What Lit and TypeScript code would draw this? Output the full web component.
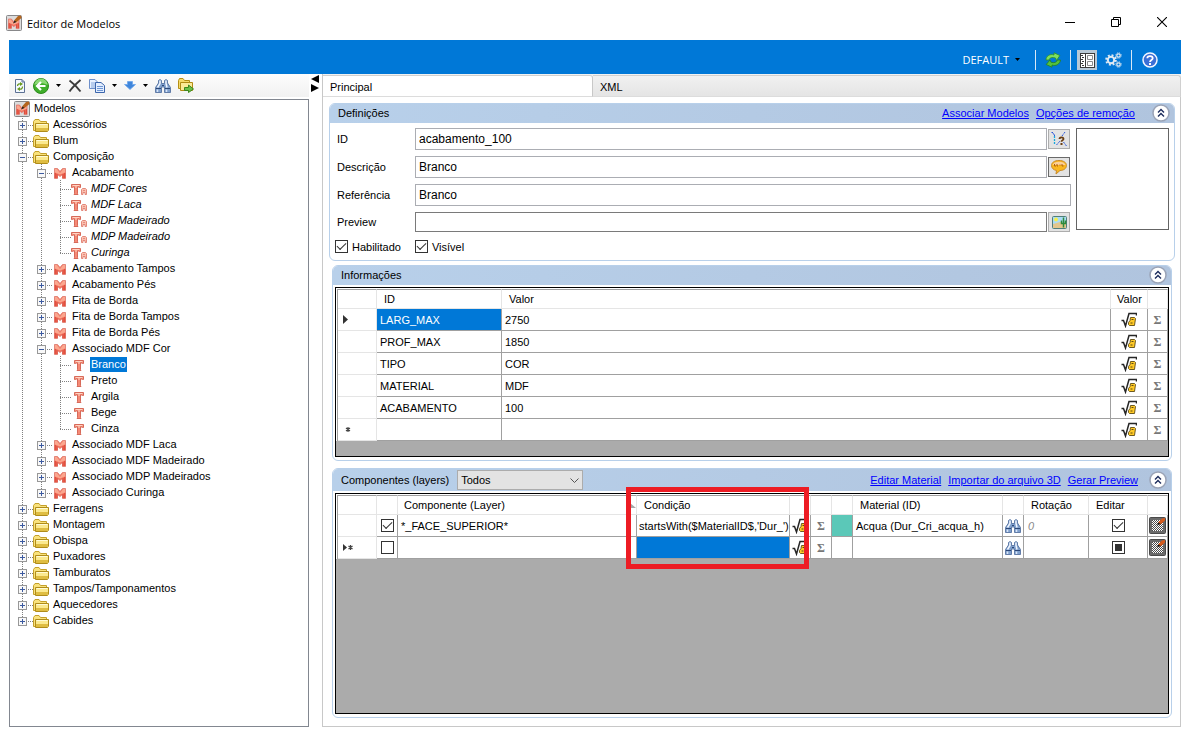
import { LitElement, html, svg, css, nothing } from "lit";
import { customElement } from "lit/decorators.js";
import { classMap } from "lit/directives/class-map.js";

/* ---------- icons ---------- */

const modelMark = svg`
  <path d="M.5 .5H3.500L6 3.500L8.500 .5H11.500V10.500H8.500V6.500L6 8.500L3.500 6.500V10.500H.5Z" fill="#f4705c" stroke="#e08074" stroke-width=".9"/>
  <path d="M1 1H3L6 5L9 1H11V4.500L6 6.500L1 4.500Z" fill="#ffcbb0" opacity=".6"/>
  <path d="M1.200 5V10M3 6V10M9 6V10M10.800 5V10" stroke="#d9402f" stroke-width=".9"/>`;

const appIcon = html`<svg width="16" height="16" viewBox="0 0 16 16" aria-hidden="true">
  <rect x=".5" y=".5" width="15" height="15" rx="1" fill="#dcdcdc" stroke="#88888a"/>
  <g transform="translate(2 3.500) scale(.96)">${modelMark}</g>
  <path d="M8 7.500L8.500 5L12 1L15 .5L15.500 3L10.500 7Z" fill="#b5651d"/>
  <path d="M7 8.500L8.500 5.500L10.500 7Z" fill="#222"/>
</svg>`;

const folderIcon = html`<svg width="16" height="14" viewBox="0 0 16 14" aria-hidden="true">
  <path d="M.5 12.500V3.500L2 1.500H6L7.500 3.500H13.500V12.500Z" fill="#f9e27c" stroke="#c4a02a"/>
  <path d="M2.500 13.500V5.500H15.500V12L14.500 13.500Z" fill="#fbe98e" stroke="#b08c1a"/>
  <path d="M3 10H15V12L14 13H3Z" fill="#dfbd42"/>
  <path d="M3.500 6.500H14.500" stroke="#fffbd6"/>
</svg>`;

const groupIcon = html`<svg width="12" height="11" viewBox="0 0 12 11" aria-hidden="true">${modelMark}</svg>`;

const itemShape = svg`
  <path d="M.5 .5H9.500V3.500H8.500L8 3H6.500V9.500L7 10.500H3L3.500 9.500V3H2L1.500 3.500H.5Z" fill="#f58a76" stroke="#d2604f" stroke-width=".9"/>
  <path d="M1.500 1.500H8.500M5 2V4" stroke="#ffd3c2"/>`;

const itemIcon = html`<svg width="10" height="11" viewBox="0 0 10 11" aria-hidden="true">${itemShape}</svg>`;

const autoItemIcon = html`<svg width="16" height="11" viewBox="0 0 16 11" aria-hidden="true">
  ${itemShape}
  <path d="M10.500 10.500V5.500L11.500 4.500H14.500L15.500 5.500V10.500H14V8.500H12V10.500Z" fill="#fbc0b0" stroke="#e07f70" stroke-width=".9"/>
  <path d="M12 6.500H14" stroke="#e07f70" stroke-width=".8"/>
</svg>`;

const refreshDocIcon = html`<svg width="12" height="14" viewBox="0 0 12 14" aria-hidden="true">
  <path d="M1.500 .5H8L10.500 3V13.500H1.500Z" fill="#f4f8ff" stroke="#5c7194"/>
  <path d="M8 .5V3H10.500" fill="none" stroke="#5c7194"/>
  <path d="M3.500 7C3.500 5 5 4.500 7 5M8.500 7.500C8.500 10 7 10.500 5 10" fill="none" stroke="#6a9a1f" stroke-width="1.300"/>
  <path d="M6 3L9 5L6 7ZM6 8L3 10L6 12Z" fill="#6a9a1f"/>
</svg>`;

const backIcon = html`<svg width="16" height="16" viewBox="0 0 16 16" aria-hidden="true">
  <circle cx="8" cy="8" r="7.500" fill="#3fae2a" stroke="#2c8a1c"/>
  <path d="M1.500 7A6.500 6.500 0 0 1 14.500 7C11 4.500 5 4.500 1.500 7Z" fill="#8ad873"/>
  <path d="M12.500 8H5M8 4L4 8L8 12" fill="none" stroke="#fff" stroke-width="2.200"/>
</svg>`;

const deleteIcon = html`<svg width="14" height="14" viewBox="0 0 14 14" aria-hidden="true">
  <path d="M1.500 1.500C5 4 9 8 12.500 12.500M12.500 1C9 4 4.500 8 1.500 12.500" fill="none" stroke="#3c3c3c" stroke-width="1.900"/>
</svg>`;

const copyIcon = html`<svg width="16" height="14" viewBox="0 0 16 14" aria-hidden="true">
  <path d="M.5 .5H6L8.500 3V9.500H.5Z" fill="#e8f1ff" stroke="#6d8fca"/>
  <path d="M2 4H7M2 6H7M2 8H7" stroke="#86a8dc"/>
  <path d="M6.500 3.500H12L15.500 6.500V13.500H6.500Z" fill="#e3eeff" stroke="#3c66ac"/>
  <path d="M8 7.500H14M8 9.500H14M8 11.500H14" stroke="#6f97d4"/>
</svg>`;

const downIcon = html`<svg width="12" height="9" viewBox="0 0 12 9" aria-hidden="true">
  <path d="M3.500 .5H8.500V3.500H11.500L6 8.500L.5 3.500H3.500Z" fill="#3f86dc" stroke="#6fa6ea" stroke-width=".8"/>
</svg>`;

const binocularsIcon = html`<svg width="16" height="14" viewBox="0 0 16 14" aria-hidden="true">
  <path d="M3.500 1.500L5 .5L6.500 1.500V4.500H9.500V1.500L11 .5L12.500 1.500V4L15.500 8.500V13.500H9.500V8H6.500V13.500H.5V8.500L3.500 4Z" fill="#7f9fcc" stroke="#4a6899" stroke-width=".8"/>
  <path d="M5 1.500V4.500L2.500 8.500M11 1.500V4.500L12 8.500" stroke="#f0f6ff" stroke-width="1.500" fill="none"/>
  <path d="M1 9.500H6M10 9.500H15M7 6.500H9" stroke="#2b4777"/>
  <path d="M2.500 10.500V13M11.500 10.500V13" stroke="#d9e6f8" stroke-width="1.500"/>
</svg>`;

const exportFolderIcon = html`<svg width="16" height="15" viewBox="0 0 16 15" aria-hidden="true">
  <path d="M.5 10.500V2.500L1.500 .5H5L6.500 2.500H11.500V10.500Z" fill="#f6da6a" stroke="#b58f14"/>
  <path d="M2.500 12.500V4.500H14.500V12.500Z" fill="#fbea97" stroke="#b08b14"/>
  <path d="M6.500 9.500H10.500V7L15.500 11L10.500 14.500V12.500H6.500Z" fill="#6cc04a" stroke="#3c861d"/>
</svg>`;

const caret = html`<svg width="5" height="3" viewBox="0 0 5 3" aria-hidden="true"><path d="M0 0H5L2.500 3Z" fill="#000"/></svg>`;

const syncIcon = html`<svg width="16" height="16" viewBox="0 0 16 16" aria-hidden="true">
  <path d="M1 8C1 4 5 1.500 9 3V.8L14.800 3.500L11.500 8.500L10.500 6C7.500 4.800 4.500 5.500 4 8Z" fill="#7fe060" stroke="#2c8f2a" stroke-width=".8"/>
  <path d="M15.500 8C15 12 11 14.500 7 13V15.200L1.200 12.500L5 8L6 10.200C9 11.200 11.500 10.500 12.500 8Z" fill="#55c23e" stroke="#23801f" stroke-width=".8"/>
</svg>`;

const panelIcon = html`<svg width="20" height="20" viewBox="0 0 20 20" aria-hidden="true">
  <rect width="20" height="20" fill="#b9c9d6"/>
  <rect x="3.500" y="3.500" width="14" height="14" fill="#fff" stroke="#3b3b3b"/>
  <path d="M8.500 3.500V17.500" stroke="#3b3b3b"/>
  <path d="M4 5.500H6M5 7.500H7M4 9.500H6M5 11.500H7M4 13.500H6M5 15.500H7" stroke="#3b3b3b"/>
  <path d="M10.500 5.500H15.500V9.500H10.500ZM10.500 11.500H15.500V15.500H10.500Z" fill="none" stroke="#8a8a8a"/>
</svg>`;

const gearsIcon = html`<svg width="17" height="16" viewBox="0 0 17 16" aria-hidden="true">
  <circle cx="6" cy="8" r="3.200" fill="none" stroke="#dfe9f2" stroke-width="2"/>
  <circle cx="6" cy="8" r="4.800" fill="none" stroke="#dfe9f2" stroke-width="2" stroke-dasharray="1.900 1.870"/>
  <circle cx="13.500" cy="3.500" r="1.700" fill="none" stroke="#dfe9f2" stroke-width="1.200"/>
  <circle cx="13.500" cy="3.500" r="2.700" fill="none" stroke="#dfe9f2" stroke-dasharray="1.100 1.020"/>
  <circle cx="13.500" cy="12.500" r="1.700" fill="none" stroke="#dfe9f2" stroke-width="1.200"/>
  <circle cx="13.500" cy="12.500" r="2.700" fill="none" stroke="#dfe9f2" stroke-dasharray="1.100 1.020"/>
</svg>`;

const helpIcon = html`<svg width="16" height="16" viewBox="0 0 16 16" aria-hidden="true">
  <circle cx="8" cy="8" r="7" fill="#3b6fd6" stroke="#f2f6ff" stroke-width="1.500"/>
  <path d="M5.300 6.200C5.300 3.300 10.700 3.300 10.700 6.200C10.700 8 8 7.800 8 10" fill="none" stroke="#fff" stroke-width="1.800"/>
  <rect x="7" y="11" width="2" height="2" fill="#fff"/>
</svg>`;

const collapseIcon = html`<svg width="18" height="18" viewBox="0 0 18 18" aria-hidden="true">
  <circle cx="9" cy="9" r="8" fill="#fff" stroke="#9aa3b6" stroke-width="1.500"/>
  <path d="M6 8.500L9 5.500L12 8.500M6 12.500L9 9.500L12 12.500" fill="none" stroke="#1c2c5c" stroke-width="1.400"/>
</svg>`;

const formulaIcon = html`<svg width="16" height="16" viewBox="0 0 16 16" aria-hidden="true">
  <path d="M.5 8.500H2.500L4.500 14L8 1.500H15.500V3.500" fill="none" stroke="#262626" stroke-width="1.500"/>
  <path d="M9.500 5.500H13.500L14.500 6.500L13.500 13.500H8.500L7.500 12.500V10.500L9 8.500Z" fill="#ffc926" stroke="#5c4a14" stroke-width=".9"/>
  <path d="M10.500 7.500H12.500M9.500 11H11.500" stroke="#5c4a14"/>
</svg>`;

const variableIcon = html`<svg width="16" height="16" viewBox="0 0 16 16" aria-hidden="true">
  <path d="M.5 1.500H2V3H3.500V5" fill="none" stroke="#2c56d8" stroke-dasharray="1.500 1"/>
  <path d="M3.500 5V13.500" stroke="#17a7dc" stroke-dasharray="2 1" stroke-width="1.300"/>
  <path d="M5.500 14L9 10M11 5L14 1" stroke="#2c56d8" stroke-dasharray="2 1"/>
  <path d="M12.500 11L15.500 15" stroke="#2c56d8" stroke-dasharray="2 1"/>
  <path d="M8.500 8C8.500 5.800 12.500 5.800 12.500 8C12.500 9.500 10.500 9 10.500 10.800" fill="none" stroke="#6b3f14" stroke-width="1.800"/>
  <rect x="9.500" y="12" width="2" height="2" fill="#6b3f14"/>
</svg>`;

const speechIcon = html`<svg width="16" height="15" viewBox="0 0 16 15" aria-hidden="true">
  <path d="M8 .5C12.500 .5 15.500 2.500 15.500 5.500C15.500 8.500 12.500 10.500 9 10.500L5 14L5.500 10.500C2.500 10 .5 8 .5 5.500C.5 2.500 3.500 .5 8 .5Z" fill="#f9b720" stroke="#c98a2a"/>
  <path d="M1.500 5C2.500 .5 13.500 .5 14.500 5Z" fill="#fbd09a"/>
  <path d="M3.500 4V6H5M6 4V6H7M9 4.500V5.500M11 4V6H12.500" fill="none" stroke="#b0600c"/>
</svg>`;

const pictureIcon = html`<svg width="15" height="13" viewBox="0 0 15 13" aria-hidden="true">
  <rect x=".5" y=".5" width="14" height="12" rx="1" fill="#a9dcf5" stroke="#4f7f7a"/>
  <path d="M1 8L8 6L14 8V12H1Z" fill="#e2c68c"/>
  <circle cx="4" cy="3.500" r="1.900" fill="#f7f04a"/>
  <path d="M11.500 1.500V11.500M9.500 4.500V7.500H13.500V4.500" fill="none" stroke="#2f8a3a" stroke-width="1.500"/>
</svg>`;

const materialEditIcon = html`<svg width="17" height="17" viewBox="0 0 17 17" aria-hidden="true">
  <rect x=".5" y=".5" width="16" height="16" rx="1" fill="#6a6a6a" stroke="#4a4a4a"/>
  <rect x="3" y="3" width="11" height="11" fill="#fff"/>
  <path d="M3 3.500H14M4 4.500H14M3 5.500H14M4 6.500H14M3 7.500H14M4 8.500H14M3 9.500H14M4 10.500H14M3 11.500H14M4 12.500H14M3 13.500H14" stroke="#4c4c4c" stroke-dasharray="1 1" shape-rendering="crispEdges"/>
  <path d="M9 7.500L9.500 5L13 1.500L16 1V3.500L12 7Z" fill="#d65a1c"/>
  <path d="M8 8.500L9.500 5.500L11.500 7Z" fill="#111"/>
</svg>`;

const currentMark = html`<svg width="5" height="9" viewBox="0 0 5 9" role="img" aria-label="linha atual"><path d="M0 0L5 4.500L0 9Z" fill="#333"/></svg>`;

const newMark = html`<svg width="8" height="5" viewBox="0 0 8 5" role="img" aria-label="nova linha"><path d="M5 0V5M3 1L7 4M7 1L3 4" stroke="#444" stroke-width="1.200"/></svg>`;

const bothMark = html`<svg width="10" height="7" viewBox="0 0 10 7" role="img" aria-label="nova linha atual"><path d="M0 0L4 3.500L0 7Z" fill="#333"/><path d="M7.500 1V6M5.500 2L9.500 5M9.500 2L5.500 5" stroke="#444" stroke-width="1.200"/></svg>`;

/* ---------- data ---------- */

type Kind = "root" | "folder" | "group" | "item" | "auto";

interface TreeNode {
  label: string;
  kind: Kind;
  selected?: boolean;
  children?: TreeNode[];
}

const leaf = (kind: Kind) => (label: string): TreeNode => ({ label, kind });

const tree: TreeNode = {
  label: "Modelos",
  kind: "root",
  children: [
    ...["Acessórios", "Blum"].map(leaf("folder")),
    {
      label: "Composição",
      kind: "folder",
      children: [
        {
          label: "Acabamento",
          kind: "group",
          children: ["MDF Cores", "MDF Laca", "MDF Madeirado", "MDP Madeirado", "Curinga"].map(leaf("auto")),
        },
        ...["Acabamento Tampos", "Acabamento Pés", "Fita de Borda", "Fita de Borda Tampos", "Fita de Borda Pés"].map(leaf("group")),
        {
          label: "Associado MDF Cor",
          kind: "group",
          children: [
            { label: "Branco", kind: "item", selected: true },
            ...["Preto", "Argila", "Bege", "Cinza"].map(leaf("item")),
          ],
        },
        ...["Associado MDF Laca", "Associado MDF Madeirado", "Associado MDP Madeirados", "Associado Curinga"].map(leaf("group")),
      ],
    },
    ...["Ferragens", "Montagem", "Obispa", "Puxadores", "Tamburatos", "Tampos/Tamponamentos", "Aquecedores", "Cabides"].map(leaf("folder")),
  ],
};

const nodeIcons = { root: appIcon, folder: folderIcon, group: groupIcon, item: itemIcon, auto: autoItemIcon };

const info: [string, string][] = [
  ["LARG_MAX", "2750"],
  ["PROF_MAX", "1850"],
  ["TIPO", "COR"],
  ["MATERIAL", "MDF"],
  ["ACABAMENTO", "100"],
];

/* ---------- tree ---------- */

@customElement("model-tree")
export class ModelTree extends LitElement {
  static styles = css`
    :host { display: block; }
    .tree { padding-left: 3px; }
    .row { display: flex; align-items: center; height: 16px; }
    .rail { flex: none; display: block; overflow: visible; }
    .icon { flex: none; width: 18px; display: flex; justify-content: center; padding-top: 2px; }
    .label { margin-left: 2px; padding: 0 1px; line-height: 15px; white-space: nowrap; }
    .auto .label { font-style: italic; }
    .selected .label { background: #0078d7; color: #fff; }
  `;

  private rail(line: "none" | "full" | "half", isNode: boolean, expander: "" | "+" | "-") {
    return html`<svg class="rail" width="19" height="16" viewBox="0 0 19 16" shape-rendering="crispEdges" aria-hidden="true">
      ${line === "none" ? nothing : svg`<path d="M9.500 0V${line === "full" ? 16 : 10}" stroke="#808080" stroke-dasharray="1 1"/>`}
      ${isNode ? svg`<path d="M9 9.500H20" stroke="#808080" stroke-dasharray="1 1"/>` : nothing}
      ${expander
        ? svg`<rect x="5.500" y="5.500" width="8" height="8" fill="#f8f8f8" stroke="#989898"/>
            <path d="M7 9.500H12${expander === "+" ? "M9.500 7V12" : ""}" stroke="#3c5aa0"/>`
        : nothing}
    </svg>`;
  }

  private renderNode(node: TreeNode, level: number, last: boolean, above: boolean[]): unknown {
    const kids = node.children ?? [];
    const expander = node.kind === "folder" || node.kind === "group" ? (kids.length ? "-" : "+") : "";
    return html`
      <div
        class=${classMap({ row: true, auto: node.kind === "auto", selected: !!node.selected })}
        role="treeitem"
        aria-level=${level + 1}
        aria-selected=${node.selected ? "true" : "false"}
      >
        ${above.map((open) => this.rail(open ? "full" : "none", false, ""))}
        ${level ? this.rail(last ? "half" : "full", true, expander) : nothing}
        <span class="icon">${nodeIcons[node.kind]}</span>
        <span class="label">${node.label}</span>
      </div>
      ${kids.map((kid, i) => this.renderNode(kid, level + 1, i === kids.length - 1, level ? [...above, !last] : []))}
    `;
  }

  render() {
    return html`<div class="tree" role="tree" aria-label="Modelos">${this.renderNode(tree, 0, true, [])}</div>`;
  }
}

/* ---------- window ---------- */

@customElement("app-root")
export class AppRoot extends LitElement {
  static styles = css`
    :host {
      display: flex;
      flex-direction: column;
      min-height: 100vh;
      box-sizing: border-box;
      padding: 0 5px 9px 9px;
      background: #fff;
      color: #000;
      font: 11px/16px "Liberation Sans", Arial, sans-serif;
    }
    *, *::before, *::after { box-sizing: border-box; }
    button { font: inherit; color: inherit; border: 0; background: none; padding: 0; margin: 0; display: inline-flex; align-items: center; justify-content: center; }
    svg { display: block; flex: none; }
    a { color: #0000ff; }

    .titlebar { display: flex; align-items: center; height: 40px; padding-top: 6px; margin-left: -3px; }
    .title { flex: 1; margin: 2px 0 0 5px; font: 11px/16px "Open Sans", "Noto Sans", sans-serif; }
    .winbtn { width: 46px; height: 30px; }
    .winbtns { display: flex; margin: -2px -4px 0 0; }

    .ribbon { display: flex; align-items: center; justify-content: flex-end; height: 34px; padding: 5px 17px 0 0; background: #0078d7; }
    .ribbon button { width: 28px; height: 24px; }
    .ribbon .profile { width: auto; padding-right: 11px; gap: 6px; color: #fff; font: 11px/16px "Open Sans", "Noto Sans", sans-serif; }
    .ribbon .sync { width: 26px; }
    .ribbon .panel { width: 24px; }
    .sep { width: 1px; height: 20px; margin: 0 4px; background: #d8e8f6; }

    .body { flex: 1; display: flex; }
    .side { flex: none; width: 300px; display: flex; flex-direction: column; }
    .toolbar { display: flex; align-items: center; height: 23px; margin-bottom: 2px; padding-left: 5px; gap: 7px; background: linear-gradient(#fdfdfd, #f1f1f1); }
    .toolbar .wide { gap: 7px; }
    .treebox { flex: 1; border: 1px solid #828790; background: #fff; }
    .splitter { flex: none; width: 13px; padding: 1px 0 0 1px; }

    .main { flex: 1; min-width: 0; display: flex; flex-direction: column; }
    .tabs { display: flex; height: 23px; padding-top: 1px; background: linear-gradient(#f2f2f2, #e4e4e4); border-left: 1px solid #c8c8c8; }
    .tab { justify-content: flex-start; padding-left: 7px; padding-top: 1px; border-top: 1px solid #d0d0d0; border-bottom: 1px solid #dcdcdc; }
    .tab.active { width: 270px; background: #fff; border-right: 1px solid #c8c8c8; border-radius: 0 3px 0 0; }
    .tab.other { flex: 1; border-right: 1px solid #d0d0d0; border-radius: 0 3px 0 0; }
    .page { flex: 1; display: flex; flex-direction: column; padding: 6px 5px 8px 6px; border: 1px solid #c8c8c8; border-top: 0; background: #fff; }

    .section { border: 1px solid #b8d0ea; border-radius: 6px; }
    .section.inset { margin: 4px 3px 0; }
    .section.grow { flex: 1; display: flex; flex-direction: column; margin-top: 7px; }
    .head { display: flex; align-items: center; height: 19px; padding: 0 4px 1px 8px; border-radius: 5px 5px 0 0; background: linear-gradient(90deg, #b8d0ea, #b0c4de); }
    .head.tall { height: 22px; }
    .head h2 { margin: 0; font: inherit; }
    .links { flex: 1; display: flex; justify-content: flex-end; gap: 7px; margin-right: 17px; }
    .tall .links { margin-right: 11px; }
    .collapse { margin-left: auto; }

    .combo { position: relative; width: 126px; margin-left: 8px; padding-top: 1px; }
    .combo select { display: block; width: 100%; height: 20px; padding: 0 3px; font: inherit; appearance: none; border: 1px solid #acacac; border-radius: 0; background: #e3e3e3; color: #000; }
    .combo svg { position: absolute; right: 4px; top: 9px; pointer-events: none; }

    .form { display: flex; gap: 5px; padding: 5px 5px 7px; }
    .fields { flex: 1; display: flex; flex-direction: column; gap: 6px; }
    .field { display: flex; align-items: center; gap: 1px; padding-left: 2px; }
    .field label { flex: none; width: 77px; }
    .field input { flex: 1; min-width: 0; height: 22px; padding: 0 3px; border: 1px solid #abadb3; font: 12px/16px "Liberation Sans", Arial, sans-serif; color: #000; }
    .field input.dark { height: 20px; border-color: #7a7a7a; }
    .field button { width: 22px; height: 20px; margin-right: 1px; border: 1px solid #adadad; background: #e3e3e3; }
    .field button.focus { border-color: #6a6a6a; }
    .checks { display: flex; gap: 14px; margin-top: 2px; height: 13px; }
    .checks label { display: flex; align-items: center; gap: 4px; }
    .thumb { flex: none; width: 93px; height: 102px; border: 1px solid #646464; }

    input[type="checkbox"] { appearance: none; flex: none; width: 13px; height: 13px; margin: 0; border: 1px solid #333; background: #fff; display: grid; place-content: center; }
    input[type="checkbox"]:checked::before { content: ""; width: 9px; height: 5px; border: solid #333; border-width: 0 0 1px 1px; transform: rotate(-45deg) translate(1px, -1px); }
    input[type="checkbox"]:indeterminate::before { content: ""; width: 7px; height: 7px; background: #333; }

    .grid { position: relative; margin: 2px 2px 3px; border: 1px solid #000; background: #ababab; }
    .grid.spare { padding-bottom: 15px; }
    .grow .grid { flex: 1; }
    .sheet { padding: 1px 0 0 1px; background: #fff; }
    table { width: 100%; table-layout: fixed; border-collapse: separate; border-spacing: 0; border-left: 1px solid #a0a0a0; background: #fff; }
    th, td { height: 22px; padding: 0 3px; border: solid #a0a0a0; border-width: 0 1px 1px 0; text-align: left; font-weight: normal; line-height: 16px; white-space: nowrap; overflow: hidden; }
    thead th { height: 20px; padding: 0 7px; border-top-width: 1px; border-right-color: #e5e5e5; border-bottom-color: #e5e5e5; }
    thead th.tight { padding: 0 6px; }
    tbody th { border-color: #e5e5e5; padding: 0 0 0 5px; }
    td.mid { padding: 0; }
    td.mid > * { margin: 0 auto; display: flex; }
    td.mid > input { display: grid; }
    td.sel { background: #0078d7; color: #fff; }
    td.cond { padding: 0 0 0 2px; }
    .sigma { color: #777; font: bold 12px/14px "Liberation Serif", serif; }
    td.swatch { background: #5bc8b8; }
    td.ghost { color: #8a8a8a; font-style: italic; padding-left: 4px; }
    .w-mark { width: 39px; }
    .w-icon { width: 21px; }
    .w-last { width: 20px; }
    .w-fx { width: 37px; }
    .w-id { width: 125px; }
    .w-cond { width: 153px; }
    .w-mat { width: 150px; }
    .w-rot { width: 65px; }
    .w-edit { width: 59px; }
    .sorted { display: flex; align-items: center; justify-content: space-between; margin-right: -6px; }
    .highlight { position: absolute; top: -7px; right: 359px; width: 183px; height: 82px; border: 5px solid #ed1c24; pointer-events: none; }
  `;

  private head(title: string, links: string[], combo = false) {
    return html`<header class=${classMap({ head: true, tall: combo })}>
      <h2>${title}</h2>
      ${combo
        ? html`<div class="combo">
            <select aria-label="Filtro de componentes"><option>Todos</option></select>
            <svg width="9" height="5" viewBox="0 0 9 5" aria-hidden="true"><path d="M.5 .5L4.500 4.500L8.500 .5" fill="none" stroke="#555"/></svg>
          </div>`
        : nothing}
      ${links.length ? html`<nav class="links">${links.map((t) => html`<a href="#">${t}</a>`)}</nav>` : nothing}
      <button class="collapse" aria-label=${"Recolher " + title}>${collapseIcon}</button>
    </header>`;
  }

  private formula() {
    return html`<td class="mid"><button aria-label="Fórmula">${formulaIcon}</button></td>
      <td class="mid"><button class="sigma" aria-label="Somatório">Σ</button></td>`;
  }

  private infoRow(mark: unknown, id: string, value: string, selected: boolean) {
    return html`<tr>
      <th scope="row">${mark}</th>
      <td class=${classMap({ sel: selected })}>${id}</td>
      <td>${value}</td>
      ${this.formula()}
    </tr>`;
  }

  private layerRow(current: boolean, layer: string, cond: string, material: string) {
    return html`<tr>
      <th scope="row">${current ? bothMark : nothing}</th>
      <td class="mid"><input type="checkbox" aria-label="Ativo" .checked=${!current} /></td>
      <td>${layer}</td>
      <td class=${classMap({ cond: true, sel: current })}>${cond}</td>
      ${this.formula()}
      <td class=${classMap({ swatch: !current })}></td>
      <td>${material}</td>
      <td class="mid"><button aria-label="Procurar material">${binocularsIcon}</button></td>
      <td class="ghost">${current ? "" : "0"}</td>
      <td class="mid"><input type="checkbox" aria-label="Editar" .checked=${!current} .indeterminate=${current} /></td>
      <td class="mid"><button aria-label="Editar material">${materialEditIcon}</button></td>
    </tr>`;
  }

  render() {
    return html`
      <header class="titlebar">
        ${appIcon}
        <h1 class="title">Editor de Modelos</h1>
        <div class="winbtns">
          <button class="winbtn" aria-label="Minimizar"><svg width="10" height="10" viewBox="0 0 10 10"><path d="M0 5.500H10" stroke="#000"/></svg></button>
          <button class="winbtn" aria-label="Restaurar"><svg width="10" height="10" viewBox="0 0 10 10"><path d="M.5 2.500H7.500V9.500H.5ZM2.500 2.500V.5H9.500V7.500H7.500" fill="none" stroke="#000"/></svg></button>
          <button class="winbtn" aria-label="Fechar"><svg width="10" height="10" viewBox="0 0 10 10"><path d="M0 0L10 10M10 0L0 10" stroke="#000" stroke-width="1.100"/></svg></button>
        </div>
      </header>

      <div class="ribbon">
        <button class="profile">DEFAULT ${caret}</button>
        <span class="sep"></span>
        <button class="sync" aria-label="Sincronizar">${syncIcon}</button>
        <span class="sep"></span>
        <button class="panel" aria-label="Painel">${panelIcon}</button>
        <button aria-label="Configurações">${gearsIcon}</button>
        <span class="sep"></span>
        <button aria-label="Ajuda">${helpIcon}</button>
      </div>

      <div class="body">
        <aside class="side">
          <div class="toolbar">
            <button aria-label="Atualizar">${refreshDocIcon}</button>
            <button class="wide" aria-label="Voltar">${backIcon}${caret}</button>
            <button aria-label="Excluir">${deleteIcon}</button>
            <button class="wide" aria-label="Copiar">${copyIcon}${caret}</button>
            <button class="wide" aria-label="Mover">${downIcon}${caret}</button>
            <button aria-label="Procurar">${binocularsIcon}</button>
            <button aria-label="Exportar">${exportFolderIcon}</button>
          </div>
          <div class="treebox"><model-tree></model-tree></div>
        </aside>
        <div class="splitter">
          <svg width="10" height="18" viewBox="0 0 10 18" aria-hidden="true"><path d="M9 0V8L1 4ZM1 9V17L9 13Z" fill="#000"/></svg>
        </div>

        <main class="main">
          <div class="tabs" role="tablist">
            <button class="tab active" role="tab" aria-selected="true">Principal</button>
            <button class="tab other" role="tab" aria-selected="false">XML</button>
          </div>
          <div class="page">
            <section class="section">
              ${this.head("Definições", ["Associar Modelos", "Opções de remoção"])}
              <div class="form">
                <div class="fields">
                  <div class="field">
                    <label for="id">ID</label><input id="id" type="text" value="acabamento_100" />
                    <button aria-label="Variáveis">${variableIcon}</button>
                  </div>
                  <div class="field">
                    <label for="desc">Descrição</label><input id="desc" type="text" value="Branco" />
                    <button class="focus" aria-label="Traduções">${speechIcon}</button>
                  </div>
                  <div class="field"><label for="ref">Referência</label><input id="ref" type="text" value="Branco" /></div>
                  <div class="field">
                    <label for="preview">Preview</label><input id="preview" class="dark" type="text" />
                    <button aria-label="Escolher imagem">${pictureIcon}</button>
                  </div>
                  <div class="checks">
                    <label><input type="checkbox" checked />Habilitado</label>
                    <label><input type="checkbox" checked />Visível</label>
                  </div>
                </div>
                <div class="thumb"></div>
              </div>
            </section>

            <section class="section inset">
              ${this.head("Informações", [])}
              <div class="grid spare">
                <div class="sheet">
                  <table>
                    <colgroup><col class="w-mark" /><col class="w-id" /><col /><col class="w-fx" /><col class="w-last" /></colgroup>
                    <thead>
                      <tr><th></th><th scope="col">ID</th><th scope="col">Valor</th><th scope="col" class="tight">Valor</th><th></th></tr>
                    </thead>
                    <tbody>
                      ${info.map(([id, value], i) => this.infoRow(i ? nothing : currentMark, id, value, i === 0))}
                      ${this.infoRow(newMark, "", "", false)}
                    </tbody>
                  </table>
                </div>
              </div>
            </section>

            <section class="section inset grow">
              ${this.head("Componentes (layers)", ["Editar Material", "Importar do arquivo 3D", "Gerar Preview"], true)}
              <div class="grid">
                <div class="sheet">
                  <table>
                    <colgroup>
                      <col class="w-mark" /><col class="w-icon" /><col /><col class="w-cond" /><col class="w-icon" /><col class="w-icon" />
                      <col class="w-icon" /><col class="w-mat" /><col class="w-icon" /><col class="w-rot" /><col class="w-edit" /><col class="w-last" />
                    </colgroup>
                    <thead>
                      <tr>
                        <th></th><th></th>
                        <th scope="col" class="tight">
                          <span class="sorted">Componente (Layer)
                            <svg width="6" height="5" viewBox="0 0 6 5" aria-hidden="true"><path d="M0 0L6 5H0Z" fill="#a8a8a8"/></svg>
                          </span>
                        </th>
                        <th scope="col">Condição</th><th></th><th></th><th></th>
                        <th scope="col">Material (ID)</th><th></th>
                        <th scope="col">Rotação</th><th scope="col">Editar</th><th></th>
                      </tr>
                    </thead>
                    <tbody>
                      ${this.layerRow(false, "*_FACE_SUPERIOR*", "startsWith($MaterialID$,'Dur_')", "Acqua (Dur_Cri_acqua_h)")}
                      ${this.layerRow(true, "", "", "")}
                    </tbody>
                  </table>
                </div>
                <div class="highlight"></div>
              </div>
            </section>
          </div>
        </main>
      </div>
    `;
  }
}
